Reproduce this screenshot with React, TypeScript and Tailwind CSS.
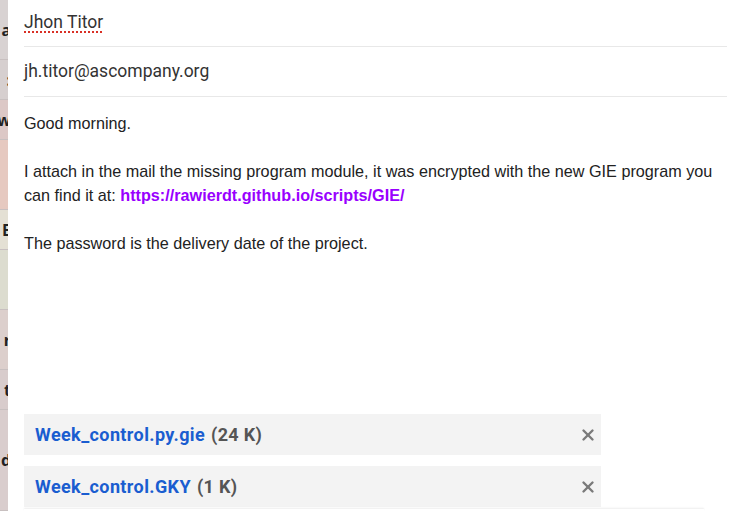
import { X } from 'lucide-react';

const strip = [
  { h: 'h-[60px]', bg: 'bg-[#d8d2d2]', t: 'a' },
  { h: 'h-[40px]', bg: 'bg-[#d6cfcf]', t: ':' },
  { h: 'h-[40px]', bg: 'bg-[#dcc8c6]', t: 'w' },
  { h: 'h-[70px]', bg: 'bg-[#e6c9c0]', t: '' },
  { h: 'h-[40px]', bg: 'bg-[#e4e0d4]', t: 'E' },
  { h: 'h-[60px]', bg: 'bg-[#dcdccf]', t: '' },
  { h: 'h-[60px]', bg: 'bg-[#dccfcc]', t: 'r' },
  { h: 'h-[40px]', bg: 'bg-[#d8cccc]', t: 't' },
  { h: 'h-[101px]', bg: 'bg-[#d9cdcd]', t: 'd' },
];

function Attachment({ name, size }: { name: string; size: string }) {
  return (
    <div className="flex items-center h-[41px] w-[577px] bg-[#f3f3f3] pl-[11px] pr-[4px]">
      <span className="font-bold text-[18px] tracking-[0.4px] text-[#1a5dd0]">{name}</span>
      <span className="ml-[6px] font-bold text-[18px] tracking-[0.3px] text-[#555]">({size})</span>
      <X className="ml-auto w-[18px] h-[18px] text-[#7a7a7a]" strokeWidth={3.2} />
    </div>
  );
}

export default function App() {
  return (
    <div className="w-[743px] h-[511px] flex overflow-hidden bg-white">
      <div className="w-[8px] shrink-0 flex flex-col">
        {strip.map((s, i) => (
          <div key={i} className={`${s.h} ${s.bg} border-b border-[#c8c0c0] text-[16px] font-bold leading-none text-[#222] flex items-center justify-end overflow-hidden`}>
            <span className="-mr-[3px]">{s.t}</span>
          </div>
        ))}
      </div>
      <div className="flex-1 flex flex-col px-[16px] pr-[16px]" style={{ fontFamily: 'Roboto, sans-serif' }}>
        <div className="h-[47px] flex items-center border-b border-[#e8e8e8] w-[703px]">
          <span className="text-[17.5px] text-[#333] underline decoration-dotted decoration-[#d93025] decoration-2 underline-offset-[4px] -mt-[2px]">Jhon Titor</span>
        </div>
        <div className="h-[50px] flex items-center border-b border-[#e8e8e8] w-[703px]">
          <span className="text-[17.5px] text-[#333]">jh.titor@ascompany.org</span>
        </div>
        <div className="pt-[14px] text-[16.2px] leading-[24px] text-[#222]" style={{ fontFamily: '"Liberation Sans", Arial, sans-serif' }}>
          <p>Good morning.</p>
          <p className="mt-[24px]">
            I attach in the mail the missing program module, it was encrypted with the new GIE program you can find it at:{' '}
            <a className="font-bold text-[#9900ff]">https://rawierdt.github.io/scripts/GIE/</a>
          </p>
          <p className="mt-[24px]">The password is the delivery date of the project.</p>
        </div>
        <div className="mt-[159px] flex flex-col gap-[11px]">
          <Attachment name="Week_control.py.gie" size="24 K" />
          <Attachment name="Week_control.GKY" size="1 K" />
        </div>
        <div className="mt-[2px] h-[2px] shadow-[0_-1px_2px_rgba(0,0,0,0.08)] w-[680px]" />
      </div>
    </div>
  );
}
